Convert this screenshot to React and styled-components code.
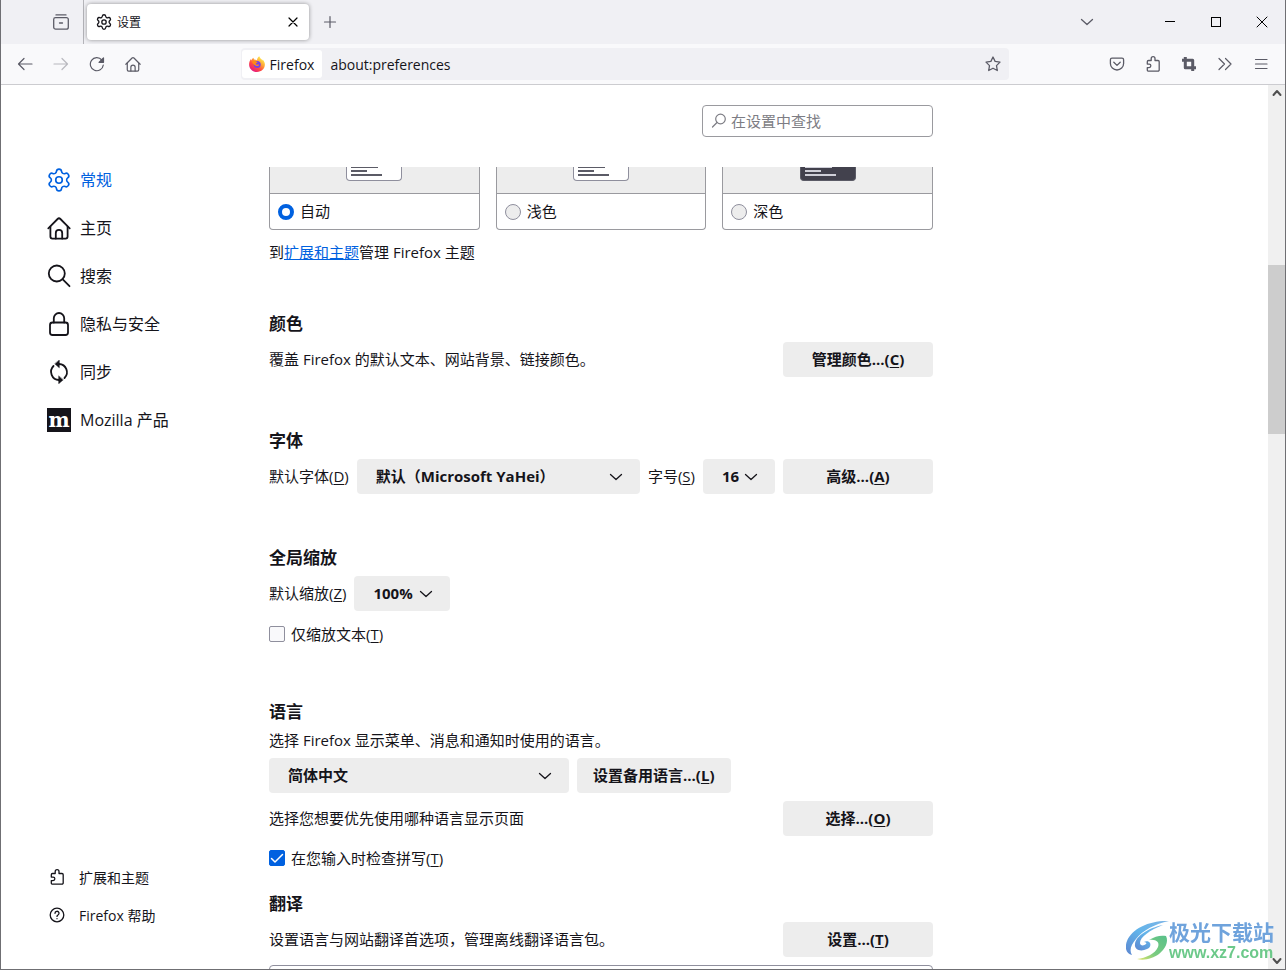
import React, { useState } from 'react';
import styled, { createGlobalStyle } from 'styled-components';

const GlobalStyle = createGlobalStyle`
  * { box-sizing: border-box; }

  body {
    margin: 0;
    color: #15141a;
    background: #fff;
    font-family: "Open Sans", "Noto Sans CJK SC", sans-serif;
    font-size: 15px;
    line-height: 19px;
  }

  button, input, select { font: inherit; color: inherit; }
`;

const Window = styled.div`
  display: flex;
  flex-direction: column;
  height: 100vh;
  border: 1px solid #6f6f73;
  border-top: none;
  overflow: hidden;
`;

const Icon = styled.svg`
  display: block;
  flex: none;
  width: ${({ $size }) => $size || 16}px;
  height: ${({ $size }) => $size || 16}px;
  fill: none;
  stroke: currentColor;
  stroke-width: ${({ $stroke }) => $stroke || 1.2};
  stroke-linecap: round;
  stroke-linejoin: round;
`;

/* browser chrome */

const TabStrip = styled.div`
  display: flex;
  align-items: center;
  flex: none;
  height: 44px;
  background: #f0f0f4;
  color: #5b5b66;
`;

const ToolButton = styled.button`
  display: flex;
  align-items: center;
  justify-content: center;
  flex: none;
  width: ${({ $width }) => $width || 36}px;
  height: 32px;
  padding: 0;
  border: none;
  background: transparent;
  color: ${({ $dark }) => ($dark ? '#000' : '#5b5b66')};

  &:disabled { opacity: 0.4; }
`;

const ViewArea = styled.div`
  display: flex;
  justify-content: flex-end;
  width: 83px;
  height: 44px;
  padding: 6px 4px 0 0;
  border-right: 1px solid #b4b4b9;
`;

const Tab = styled.div`
  display: flex;
  align-items: center;
  width: 222px;
  height: 36px;
  margin: 0 3px;
  padding: 0 0 0 9px;
  border-radius: 4px;
  background: #fff;
  box-shadow: 0 0 4px rgba(0, 0, 0, 0.4);
  color: #15141a;
`;

const TabTitle = styled.span`
  flex: 1;
  padding-left: 5px;
  font-size: 12px;
`;

const WindowControls = styled.div`
  display: flex;
  margin-left: auto;
`;

const ListTabs = styled(ToolButton)`
  margin-right: 42px;
`;

const NavBar = styled.div`
  display: flex;
  align-items: center;
  flex: none;
  height: 41px;
  padding: 0 6px;
  background: #f9f9fb;
  border-bottom: 1px solid #ccccd0;
`;

const Spacer = styled.div`
  flex: 7;
`;

const UrlBar = styled.div`
  display: flex;
  align-items: center;
  flex: 60;
  height: 32px;
  padding: 2px 0 2px 1px;
  border-radius: 4px;
  background: #f0f0f4;
  font-size: 14px;
`;

const Identity = styled.button`
  display: flex;
  align-items: center;
  gap: 5px;
  height: 28px;
  padding: 0 8px 0 7px;
  border: none;
  border-radius: 3px;
  background: #fff;
`;

const UrlInput = styled.input`
  flex: 1;
  min-width: 0;
  padding: 0 8px;
  border: none;
  outline: none;
  background: transparent;
`;

/* page */

const Body = styled.div`
  display: flex;
  flex: 1;
  min-height: 0;
`;

const Sidebar = styled.nav`
  display: flex;
  flex-direction: column;
  justify-content: space-between;
  flex: none;
  width: 268px;
  padding: 71px 0 35px 46px;
`;

const Category = styled.a`
  display: flex;
  align-items: center;
  gap: 9px;
  height: 48px;
  font-size: 16px;
  text-decoration: none;
  color: ${({ $active }) => ($active ? '#0061e0' : '#15141a')};
`;

const FooterLink = styled.a`
  display: flex;
  align-items: center;
  gap: 14px;
  height: 38px;
  padding-left: 2px;
  font-size: 14px;
  text-decoration: none;
  color: #15141a;
`;

const MozillaMark = styled.span`
  width: 24px;
  height: 24px;
  background: #15141a;
  color: #fff;
  font: bold 20px/24px "DejaVu Serif", serif;
  text-align: center;
`;

const Main = styled.main`
  display: flex;
  flex-direction: column;
  flex: 1;
  min-width: 0;
`;

const SearchRow = styled.div`
  display: flex;
  justify-content: flex-end;
  flex: none;
  max-width: 664px;
  padding: 20px 0 30px;
`;

const SearchBox = styled.label`
  display: flex;
  align-items: center;
  gap: 4px;
  width: 231px;
  height: 32px;
  padding: 0 8px;
  border: 1px solid #9a9a9f;
  border-radius: 4px;
  color: #7d7d84;
`;

const SearchInput = styled.input`
  flex: 1;
  min-width: 0;
  padding: 0;
  border: none;
  outline: none;
  background: transparent;

  &::placeholder { color: #7d7d84; opacity: 1; }
`;

const Pane = styled.div`
  flex: 1;
  min-height: 0;
  max-width: 664px;
  overflow: hidden;
`;

const ThemeList = styled.div`
  display: grid;
  grid-template-columns: repeat(3, 1fr);
  gap: 16px;
`;

const ThemeCard = styled.label`
  display: block;
  border: 1px solid #9a9a9f;
  border-top: none;
  border-radius: 0 0 4px 4px;
  overflow: hidden;
`;

const ThemePreview = styled.div`
  display: flex;
  justify-content: center;
  align-items: flex-start;
  height: 27px;
  background: #ededed;
  border-bottom: 1px solid #9a9a9f;
`;

const MiniPage = styled.div`
  display: flex;
  flex-direction: column;
  gap: 2px;
  width: 56px;
  height: 14px;
  padding: 0 0 0 4px;
  border: 1px solid ${({ $dark }) => ($dark ? '#5b5b66' : '#8f8f9d')};
  border-top: none;
  border-radius: 0 0 4px 4px;
  background: ${({ $dark }) => ($dark ? '#42414d' : '#fff')};
`;

const MiniLine = styled.span`
  width: ${({ $width }) => $width}px;
  height: ${({ $thin }) => ($thin ? 1 : 2)}px;
  background: ${({ $dark }) => ($dark ? '#cfcfd8' : '#5b5b66')};
`;

const ThemeLabel = styled.div`
  display: flex;
  align-items: center;
  gap: 6px;
  height: 35px;
  padding-left: 8px;
`;

const Radio = styled.input`
  appearance: none;
  width: 16px;
  height: 16px;
  margin: 0;
  border: 1px solid #8f8f9d;
  border-radius: 50%;
  background: #ededed;

  &:checked {
    border: 4px solid #0061e0;
    background: #fff;
  }
`;

const Note = styled.p`
  margin: ${({ $top }) => $top || 0}px 0 0;
  line-height: 24px;
`;

const Link = styled.a`
  color: #0061e0;
`;

const Section = styled.section`
  margin-top: ${({ $top }) => $top || 52}px;
`;

const Heading = styled.h2`
  margin: 0;
  font-size: 17px;
  font-weight: 700;
  line-height: 24px;
`;

const Row = styled.div`
  display: flex;
  align-items: center;
  gap: 8px;
  margin-top: ${({ $top }) => $top || 6}px;
`;

const Grow = styled.span`
  flex: 1;
`;

const Button = styled.button`
  min-width: 150px;
  height: 35px;
  padding: 0 16px;
  border: none;
  border-radius: 4px;
  background: #ededed;
  font-weight: 700;
`;

const SelectWrap = styled.span`
  display: grid;
  align-items: center;
  width: ${({ $width }) => ($width ? `${$width}px` : 'auto')};
  flex: ${({ $width }) => ($width ? 'none' : '1')};

  > * { grid-area: 1 / 1; }

  > svg {
    justify-self: end;
    margin-right: 16px;
    pointer-events: none;
  }
`;

const SelectBox = styled.select`
  appearance: none;
  width: 100%;
  height: 35px;
  padding: 0 19px;
  border: none;
  border-radius: 4px;
  background: #ededed;
  font-weight: 700;
`;

const CheckLabel = styled.label`
  display: flex;
  align-items: center;
  gap: 6px;
  height: 28px;
  margin-top: ${({ $top }) => $top || 8}px;
`;

const CheckMark = styled.span`
  display: grid;

  > * { grid-area: 1 / 1; }
  > svg { color: #fff; pointer-events: none; }
`;

const CheckInput = styled.input`
  appearance: none;
  width: 16px;
  height: 16px;
  margin: 0;
  border: 1px solid #8f8f9d;
  border-radius: 2px;
  background: #f9f9fb;

  &:checked {
    border-color: #0061e0;
    background: #0061e0;
  }
`;

const Key = styled.u`
  text-underline-offset: 2px;
`;

const NextBox = styled.div`
  height: 40px;
  margin-top: 8px;
  border: 1px solid #8f8f9d;
  border-radius: 4px;
`;

const Scrollbar = styled.div`
  display: flex;
  flex-direction: column;
  align-items: center;
  flex: none;
  width: 17px;
  background: #f0f0f0;
  color: #505050;
`;

const ScrollTrack = styled.div`
  display: flex;
  flex-direction: column;
  flex: 1;
  align-self: stretch;
`;

const ScrollGap = styled.div`
  flex: ${({ $grow }) => $grow};
`;

const ScrollThumb = styled.div`
  flex: 169;
  background: #cdcdcd;
`;

const Watermark = styled.div`
  position: fixed;
  right: 12px;
  bottom: 7px;
  display: flex;
  align-items: center;
`;

const WatermarkText = styled.div`
  display: flex;
  flex-direction: column;
  font-weight: 700;
`;

const WatermarkName = styled.span`
  color: #6fa3dc;
  font-size: 21px;
  line-height: 22px;
`;

const WatermarkUrl = styled.span`
  color: #6cc98a;
  font: 600 16px/20px "Liberation Sans", sans-serif;
`;

const GEAR =
  'M9.671 4.136a2.34 2.34 0 0 1 4.659 0 2.34 2.34 0 0 0 3.319 1.915 2.34 2.34 0 0 1 2.33 4.033 2.34 2.34 0 0 0 0 3.831 2.34 2.34 0 0 1-2.33 4.033 2.34 2.34 0 0 0-3.319 1.915 2.34 2.34 0 0 1-4.659 0 2.34 2.34 0 0 0-3.32-1.915 2.34 2.34 0 0 1-2.33-4.033 2.34 2.34 0 0 0 0-3.831A2.34 2.34 0 0 1 6.35 6.051a2.34 2.34 0 0 0 3.319-1.915';

const GearIcon = ({ size, stroke }) => (
  <Icon $size={size} $stroke={stroke} viewBox="1 1 22 22">
    <path d={GEAR} />
    <circle cx="12" cy="12" r="3" />
  </Icon>
);

const HomeIcon = ({ size, stroke }) => (
  <Icon $size={size} $stroke={stroke} viewBox="0 0 24 24">
    <path d="M1.3 12.4 10.6 3a2 2 0 0 1 2.8 0l9.3 9.4" />
    <path d="M3.4 10.6v10a2 2 0 0 0 2 2h13.200a2 2 0 0 0 2-2v-10" />
    <path d="M8.800 22.500v-5.500a3.200 3.200 0 0 1 6.400 0v5.500" />
  </Icon>
);

const PuzzleIcon = () => (
  <Icon viewBox="0 0 16 16" $stroke={1.3}>
    <path d="M6.200 4.500V2.600a1.900 1.900 0 0 1 3.800 0v1.900h3a1.200 1.200 0 0 1 1.200 1.200v8.200a1.200 1.200 0 0 1-1.200 1.200H3.500a1.200 1.200 0 0 1-1.200-1.200v-2.300h1.800a1.700 1.700 0 0 0 0-3.500H2.300V5.700a1.200 1.200 0 0 1 1.200-1.200z" />
  </Icon>
);

const ChevronIcon = () => (
  <Icon viewBox="0 0 16 16" $stroke={1.3}>
    <path d="m2.500 5.500 5.500 5 5.500-5" />
  </Icon>
);

const FirefoxLogo = () => (
  <Icon viewBox="0 0 16 16" stroke="none">
    <defs>
      <linearGradient id="flame" x1="0.85" y1="0.1" x2="0.2" y2="0.95">
        <stop offset="0" stopColor="#fff44f" />
        <stop offset="0.35" stopColor="#ffa436" />
        <stop offset="0.65" stopColor="#ff4a41" />
        <stop offset="1" stopColor="#e31587" />
      </linearGradient>
    </defs>
    <g stroke="none">
      <path fill="url(#flame)" d="M10.300.2c.3 1.300 1 2 1.900 2.800.8.700 1 1 1.200 1.600.3-.3.300-.7.300-1 1.400 1.500 2.200 3.200 2.200 5 0 4.100-3.500 7.400-7.900 7.400S.1 12.700.1 8.500c0-2.100.7-3.900 1.800-5.400.1.700.3 1 .5 1.300.4-1.200 1.200-2.200 2.200-2.700-.1.700.1 1.400.5 1.900 1 0 2 .2 2.900.7C8 2.700 8.900 1 10.300.2z" />
      <circle cx="8.200" cy="8.500" r="3.500" fill="#7542e5" />
      <path fill="#ff8a16" d="M3.100 5.200c1.200-.8 2.800-.6 3.700.2.800 0 1.500.2 1.700.5-.1.900-1.300 1-1.600 1.700-.2.700.7 1.300 1.700 1 .7-.1 1.500.1 1.600.4-.7.900-1.800 1.200-3 .8C5 9.200 3.200 7.300 3.100 5.200z" />
    </g>
  </Icon>
);

const SwirlLogo = () => (
  <Icon $size={43} viewBox="0 0 43 43">
    <defs>
      <linearGradient id="swirlBlue" x1="1" y1="0" x2="0" y2="1">
        <stop offset="0" stopColor="#7fb5e6" />
        <stop offset="0.5" stopColor="#62b4ea" />
        <stop offset="1" stopColor="#5c86d0" />
      </linearGradient>
      <linearGradient id="swirlGreen" x1="1" y1="0" x2="0" y2="1">
        <stop offset="0" stopColor="#58c08a" />
        <stop offset="0.6" stopColor="#7acb80" />
        <stop offset="1" stopColor="#e3e56a" />
      </linearGradient>
    </defs>
    <g stroke="none">
      <path fill="url(#swirlBlue)" d="M43 1C25 0 6 8 1 21c-3 8 0 13 5 14-3-5-1-10 4-16C17 10 29 4 43 1z" />
      <path fill="url(#swirlBlue)" d="M37 5C22 8 10 16 9 24c-1 6 6 8 12 5 3-1 4-4 3-6-1-2-4-2-6-1 2 0 3 1 2 2-2 2-6 2-6-1C14 17 24 10 37 5z" />
      <path fill="url(#swirlGreen)" d="M23 20c6-4 12-5 17-4 3 6-1 13-7 18-6 4-14 7-22 5 9-1 18-5 21-12 2-5-2-8-9-7z" />
    </g>
  </Icon>
);

const Checkbox = ({ checked, onChange, top, children }) => (
  <CheckLabel $top={top}>
    <CheckMark>
      <CheckInput type="checkbox" checked={checked} onChange={onChange} />
      {checked && (
        <Icon viewBox="0 0 16 16" $stroke={1.5}>
          <path d="m2.500 8.500 3.500 3.500 7.500-7.500" />
        </Icon>
      )}
    </CheckMark>
    <span>{children}</span>
  </CheckLabel>
);

const Select = ({ id, width, label, children }) => (
  <SelectWrap $width={width}>
    <SelectBox id={id} aria-label={label}>
      <option>{children}</option>
    </SelectBox>
    <ChevronIcon />
  </SelectWrap>
);

const themes = [
  { id: 'auto', label: '自动' },
  { id: 'light', label: '浅色' },
  { id: 'dark', label: '深色' },
];

const categories = [
  { label: '常规', icon: <GearIcon size={24} stroke={1.5} /> },
  { label: '主页', icon: <HomeIcon size={24} stroke={1.8} /> },
  {
    label: '搜索',
    icon: (
      <Icon $size={24} $stroke={1.8} viewBox="0 0 24 24">
        <circle cx="9.800" cy="9.500" r="8" />
        <path d="m15.500 15.200 7 7" />
      </Icon>
    ),
  },
  {
    label: '隐私与安全',
    icon: (
      <Icon $size={24} $stroke={1.8} viewBox="0 0 24 24">
        <rect x="3" y="10.500" width="18" height="12.500" rx="2.500" />
        <path d="M6.800 10.500V6.200a5.200 5.200 0 0 1 10.400 0v4.300" />
      </Icon>
    ),
  },
  {
    label: '同步',
    icon: (
      <Icon $size={24} $stroke={1.8} viewBox="0 0 24 24">
        <path d="M12 4a8.200 8.200 0 0 1 5.500 14M12 20A8.200 8.200 0 0 1 6.500 6" />
        <path fill="currentColor" strokeWidth="0.500" d="M12.300.3v7.500L8 4zM11.700 16.200v7.500L16 20z" />
      </Icon>
    ),
  },
  { label: 'Mozilla 产品', icon: <MozillaMark aria-hidden="true">m</MozillaMark> },
];

const BrowserChrome = () => (
  <>
    <TabStrip>
      <ViewArea>
        <ToolButton aria-label="Firefox View">
          <Icon viewBox="0 0 16 16" $stroke={1.3}>
            <path d="M3 .9h10" />
            <path d="M2.500 3.600h11a1.800 1.800 0 0 1 1.800 1.800v7.800a2 2 0 0 1-2 2H2.700a2 2 0 0 1-2-2V5.400a1.800 1.800 0 0 1 1.800-1.800zM6.500 9h3" />
          </Icon>
        </ToolButton>
      </ViewArea>
      <Tab>
        <GearIcon size={16} stroke={1.8} />
        <TabTitle>设置</TabTitle>
        <ToolButton $dark $width={32} aria-label="关闭标签页">
          <Icon viewBox="0 0 16 16">
            <path d="m4 4 8 8M12 4l-8 8" />
          </Icon>
        </ToolButton>
      </Tab>
      <ToolButton aria-label="新建标签页">
        <Icon viewBox="0 0 16 16">
          <path d="M8 2.500v11M2.500 8h11" />
        </Icon>
      </ToolButton>
      <WindowControls>
        <ListTabs aria-label="列出所有标签页">
          <ChevronIcon />
        </ListTabs>
        <ToolButton $dark $width={46} aria-label="最小化">
          <Icon viewBox="0 0 16 16" $stroke={1} shapeRendering="crispEdges">
            <path d="M3 7.500h10" />
          </Icon>
        </ToolButton>
        <ToolButton $dark $width={46} aria-label="最大化">
          <Icon viewBox="0 0 16 16" $stroke={1} shapeRendering="crispEdges">
            <rect x="3.500" y="3.500" width="9" height="9" />
          </Icon>
        </ToolButton>
        <ToolButton $dark $width={46} aria-label="关闭">
          <Icon viewBox="0 0 16 16" $stroke={1}>
            <path d="m3 3 10 10M13 3 3 13" />
          </Icon>
        </ToolButton>
      </WindowControls>
    </TabStrip>
    <NavBar>
      <ToolButton aria-label="后退">
        <Icon viewBox="0 0 16 16">
          <path d="M15 8H1.500M7 2.500 1.500 8 7 13.500" />
        </Icon>
      </ToolButton>
      <ToolButton disabled aria-label="前进">
        <Icon viewBox="0 0 16 16">
          <path d="M1 8h13.500M9 2.500 14.500 8 9 13.500" />
        </Icon>
      </ToolButton>
      <ToolButton aria-label="刷新">
        <Icon viewBox="0 0 16 16">
          <path d="M14.300 9A6.500 6.500 0 1 1 12.800 4" />
          <path fill="currentColor" d="M14.500 1.800v4.500H10z" />
        </Icon>
      </ToolButton>
      <ToolButton aria-label="主页">
        <HomeIcon size={16} stroke={1.8} />
      </ToolButton>
      <Spacer />
      <UrlBar>
        <Identity>
          <FirefoxLogo />
          Firefox
        </Identity>
        <UrlInput aria-label="地址" defaultValue="about:preferences" />
        <ToolButton $width={32} aria-label="添加书签">
          <Icon viewBox="0 0 16 16" $stroke={1.3}>
            <path d="m8 1 2.100 4.400 4.900.7-3.500 3.500.8 4.900L8 12.200l-4.300 2.300.8-4.900L1 6.100l4.900-.7z" />
          </Icon>
        </ToolButton>
      </UrlBar>
      <Spacer />
      <ToolButton aria-label="Pocket">
        <Icon viewBox="0 0 16 16" $stroke={1.3}>
          <path d="M3 2.200h10a1.600 1.600 0 0 1 1.600 1.600v3.600a6.600 6.600 0 0 1-13.200 0V3.800A1.600 1.600 0 0 1 3 2.200zM4.800 6.300 8 9.400l3.200-3.100" />
        </Icon>
      </ToolButton>
      <ToolButton aria-label="扩展">
        <PuzzleIcon />
      </ToolButton>
      <ToolButton aria-label="截图">
        <Icon viewBox="0 0 16 16" $stroke={3} strokeLinejoin="miter">
          <path strokeLinecap="butt" d="M1 4.300h10.700V15M4.300 1v10.700H15" />
        </Icon>
      </ToolButton>
      <ToolButton aria-label="更多工具">
        <Icon viewBox="0 0 16 16">
          <path d="m2 2.500 5.500 5.500L2 13.500M8.500 2.500 14 8l-5.500 5.500" />
        </Icon>
      </ToolButton>
      <ToolButton aria-label="菜单">
        <Icon viewBox="0 0 16 16">
          <path d="M2.500 3.500h11.500M2.500 8h11.500M2.500 12.500h11.500" />
        </Icon>
      </ToolButton>
    </NavBar>
  </>
);

const App = () => {
  const [theme, setTheme] = useState('auto');
  const [textOnly, setTextOnly] = useState(false);
  const [spellcheck, setSpellcheck] = useState(true);

  return (
    <Window lang="zh-CN">
      <GlobalStyle />
      <BrowserChrome />
      <Body>
        <Sidebar>
          <div>
            {categories.map((item, index) => (
              <Category key={item.label} href="#" $active={index === 0}>
                {item.icon}
                {item.label}
              </Category>
            ))}
          </div>
          <div>
            <FooterLink href="#">
              <PuzzleIcon />
              扩展和主题
            </FooterLink>
            <FooterLink href="#">
              <Icon viewBox="0 0 16 16" $stroke={1.3}>
                <circle cx="8" cy="8" r="6.800" />
                <path d="M6 6.300a2 2 0 1 1 3 1.700c-.7.400-1 .8-1 1.400M8 11.600v.1" />
              </Icon>
              Firefox 帮助
            </FooterLink>
          </div>
        </Sidebar>

        <Main>
          <SearchRow>
            <SearchBox>
              <Icon viewBox="0 0 16 16">
                <circle cx="9.500" cy="6" r="4.800" />
                <path d="m6 9.500-4.500 4.500" />
              </Icon>
              <SearchInput aria-label="搜索" placeholder="在设置中查找" />
            </SearchBox>
          </SearchRow>
          <Pane>
            <ThemeList>
              {themes.map(({ id, label }) => (
                <ThemeCard key={id}>
                  <ThemePreview>
                    <MiniPage $dark={id === 'dark'}>
                      <MiniLine $width={27} $thin $dark={id === 'dark'} />
                      <MiniLine $width={16} $dark={id === 'dark'} />
                      <MiniLine $width={31} $dark={id === 'dark'} />
                    </MiniPage>
                  </ThemePreview>
                  <ThemeLabel>
                    <Radio
                      type="radio"
                      name="theme"
                      checked={theme === id}
                      onChange={() => setTheme(id)}
                    />
                    {label}
                  </ThemeLabel>
                </ThemeCard>
              ))}
            </ThemeList>
            <Note $top={10}>
              到<Link href="#">扩展和主题</Link>管理 Firefox 主题
            </Note>

            <Section $top={48}>
              <Heading>颜色</Heading>
              <Row>
                <Grow>覆盖 Firefox 的默认文本、网站背景、链接颜色。</Grow>
                <Button>管理颜色...(<Key>C</Key>)</Button>
              </Row>
            </Section>

            <Section>
              <Heading>字体</Heading>
              <Row>
                <label htmlFor="font">默认字体(<Key>D</Key>)</label>
                <Select id="font">默认（Microsoft YaHei）</Select>
                <label htmlFor="size">字号(<Key>S</Key>)</label>
                <Select id="size" width={72}>16</Select>
                <Button>高级...(<Key>A</Key>)</Button>
              </Row>
            </Section>

            <Section>
              <Heading>全局缩放</Heading>
              <Row>
                <label htmlFor="zoom">默认缩放(<Key>Z</Key>)</label>
                <Select id="zoom" width={96}>100%</Select>
              </Row>
              <Checkbox top={9} checked={textOnly} onChange={() => setTextOnly(!textOnly)}>
                仅缩放文本(<Key>T</Key>)
              </Checkbox>
            </Section>

            <Section>
              <Heading>语言</Heading>
              <Note $top={4}>选择 Firefox 显示菜单、消息和通知时使用的语言。</Note>
              <Row>
                <Select width={300} label="语言">简体中文</Select>
                <Button>设置备用语言...(<Key>L</Key>)</Button>
              </Row>
              <Row $top={8}>
                <Grow>选择您想要优先使用哪种语言显示页面</Grow>
                <Button>选择...(<Key>O</Key>)</Button>
              </Row>
              <Checkbox checked={spellcheck} onChange={() => setSpellcheck(!spellcheck)}>
                在您输入时检查拼写(<Key>T</Key>)
              </Checkbox>
            </Section>

            <Section $top={20}>
              <Heading>翻译</Heading>
              <Row>
                <Grow>设置语言与网站翻译首选项，管理离线翻译语言包。</Grow>
                <Button>设置...(<Key>T</Key>)</Button>
              </Row>
              <NextBox />
            </Section>
          </Pane>
        </Main>

        <Scrollbar>
          <Icon viewBox="0 0 16 16" $stroke={2}>
            <path d="m4.500 10 3.500-4 3.500 4" />
          </Icon>
          <ScrollTrack>
            <ScrollGap $grow={164} />
            <ScrollThumb />
            <ScrollGap $grow={519} />
          </ScrollTrack>
          <Icon viewBox="0 0 16 16" $stroke={2}>
            <path d="m4.500 6 3.500 4 3.500-4" />
          </Icon>
        </Scrollbar>
      </Body>
      <Watermark>
        <SwirlLogo />
        <WatermarkText>
          <WatermarkName>极光下载站</WatermarkName>
          <WatermarkUrl>www.xz7.com</WatermarkUrl>
        </WatermarkText>
      </Watermark>
    </Window>
  );
};

export default App;
